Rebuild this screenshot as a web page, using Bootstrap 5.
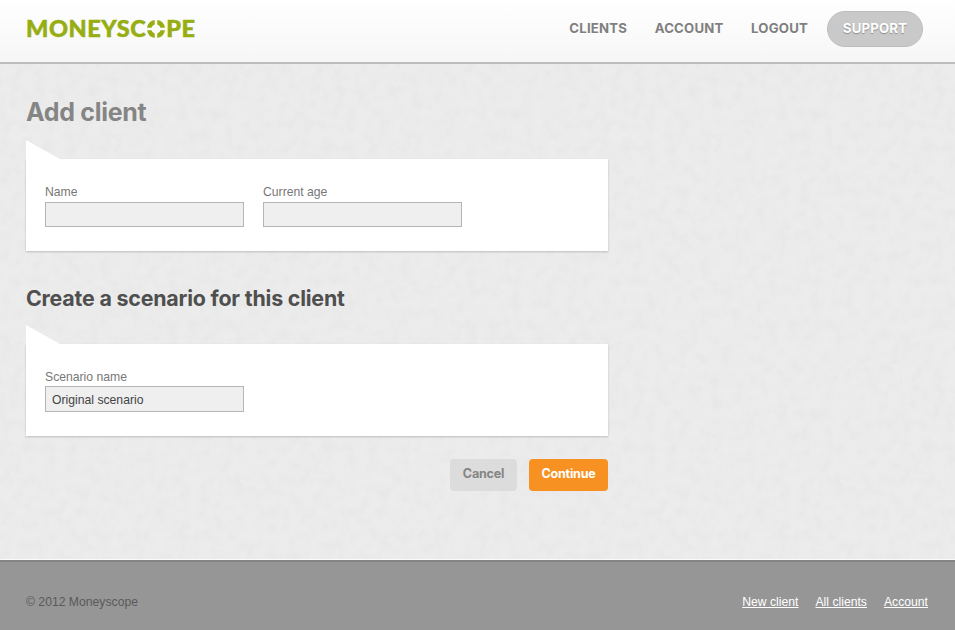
<!DOCTYPE html>
<html lang="en">
<head>
<meta charset="utf-8">
<title>Moneyscope - Add client</title>
<link href="https://cdn.jsdelivr.net/npm/bootstrap@5.3.0/dist/css/bootstrap.min.css" rel="stylesheet">
<style>
html, body { height: 630px; overflow: hidden; }
body { font-family: "Liberation Sans", Arial, sans-serif; font-size: 12px; background: #ececec; color: #666; }
.ms-shell { height: 630px; }
.ms-head { height: 64px; padding: 0 32px 5px 26px; background: linear-gradient(#ffffff, #f6f6f6); border-bottom: 2px solid #bdbdbd; }
.ms-logo { font-family: Lato, "Noto Sans", sans-serif; font-weight: 900; font-size: 23.5px; letter-spacing: .55px; color: #96ae12; line-height: 1; -webkit-text-stroke: .5px #96ae12; }
.ms-logo svg { width: 18px; height: 18px; margin: 0 1px; vertical-align: -1.5px; }
.ms-nav a { font-family: Inter, Lato, sans-serif; font-weight: 700; font-size: 13.2px; letter-spacing: .2px; color: #7f7f7f; text-decoration: none; text-shadow: 0 1px 0 #fff; }
.ms-nav { gap: 27.5px; }
.ms-nav a.ms-support { margin-left: -8.5px; width: 96px; height: 36px; border-radius: 18px; background: #c9c9c9; border: 1px solid #bdbdbd; color: #fff; text-shadow: 0 1px 1px #8a8a8a; }
.ms-main { flex: 1 1 auto; padding: 0 26px; background-color: #ececec; background-image: url("data:image/svg+xml,%3Csvg xmlns='http://www.w3.org/2000/svg' width='300' height='300'%3E%3Cfilter id='n'%3E%3CfeTurbulence type='fractalNoise' baseFrequency='.09' numOctaves='4'/%3E%3CfeColorMatrix values='0 0 0 0 .55 0 0 0 0 .55 0 0 0 0 .55 0 0 0 .22 -.08'/%3E%3C/filter%3E%3Crect width='300' height='300' filter='url(%23n)'/%3E%3C/svg%3E"); }
.ms-column { width: 582px; }
.ms-title1 { font-family: Inter, Lato, sans-serif; font-weight: 700; font-size: 25px; letter-spacing: -.3px; line-height: 32px; color: #858585; margin: 32px 0 0; }
.ms-title2 { font-family: Inter, Lato, sans-serif; font-weight: 700; font-size: 21.4px; letter-spacing: -.2px; line-height: 28px; color: #4f4f4f; margin: 33px 0 0; }
.ms-panel { position: relative; background: #fff; border-radius: 0; border: 0; box-shadow: 0 1px 2px rgba(0,0,0,.2); padding: 26px 19px 0; }
.ms-panel::before { content: ""; position: absolute; left: 0; top: -19px; width: 34px; height: 19px; background: #fff; clip-path: polygon(0 0, 100% 100%, 0 100%); }
.ms-panel-a { margin-top: 31px; height: 92px; }
.ms-panel-b { margin-top: 32px; height: 92px; }
.ms-label { display: block; font-size: 12.2px; line-height: 14px; color: #777; margin: 0 0 3px; }
.ms-panel-b .ms-label { margin-bottom: 2px; }
.ms-input { display: block; width: 199px; height: 25px; padding: 0 6px; font-family: inherit; font-size: 12.2px; color: #444; background: #efefef; border: 1px solid #b5b5b5; border-radius: 0; }
.ms-panel-b .ms-input { height: 26px; padding-top: 1px; }
.ms-fields { gap: 19px; }
.ms-actions { gap: 12px; margin-top: 23px; }
.ms-btn { height: 32px; border: 0; border-radius: 4px; padding: 0 0 2px; font-family: Inter, Lato, sans-serif; font-weight: 700; font-size: 12.5px; letter-spacing: -.2px; line-height: 1; }
.ms-btn-cancel { width: 67px; background: #dcdcdc; color: #858585; }
.ms-btn-go { width: 79px; background: #f79122; color: #fff; }
.ms-foot { height: 70px; padding: 12px 27px 0 26px; background: #969696; border-top: 2px solid #858585; box-shadow: 0 -1px 0 #fafafa; color: #5a5a5a; }
.ms-foot > div { font-size: 12.2px; }
.ms-foot-links { gap: 17px; }
.ms-foot-links a { color: #fff; text-decoration: underline; }
</style>
</head>
<body>
<div class="ms-shell d-flex flex-column">
  <header class="ms-head d-flex align-items-center justify-content-between flex-shrink-0">
    <div class="ms-logo">MONEYSC<svg viewBox="0 0 20 20" aria-hidden="true"><g fill="#96ae12"><path d="M8.6 0.1A10 10 0 0 0 .1 8.6H5A5 5 0 0 1 8.6 5Z"/><path d="M11.4 0.1A10 10 0 0 1 19.9 8.6H15A5 5 0 0 0 11.4 5Z"/><path d="M8.6 19.9A10 10 0 0 1 .1 11.4H5A5 5 0 0 0 8.6 15Z"/><path d="M11.4 19.9A10 10 0 0 0 19.9 11.4H15A5 5 0 0 1 11.4 15Z"/></g></svg>PE</div>
    <nav class="ms-nav d-flex align-items-center">
      <a href="#">CLIENTS</a>
      <a href="#">ACCOUNT</a>
      <a href="#">LOGOUT</a>
      <a href="#" class="ms-support d-flex align-items-center justify-content-center">SUPPORT</a>
    </nav>
  </header>
  <main class="ms-main">
    <div class="ms-column">
      <h1 class="ms-title1">Add client</h1>
      <div class="card ms-panel ms-panel-a">
        <div class="d-flex ms-fields">
          <div><label class="ms-label" for="f1">Name</label><input id="f1" class="ms-input" type="text"></div>
          <div><label class="ms-label" for="f2">Current age</label><input id="f2" class="ms-input" type="text"></div>
        </div>
      </div>
      <h2 class="ms-title2">Create a scenario for this client</h2>
      <div class="card ms-panel ms-panel-b">
        <div><label class="ms-label" for="f3">Scenario name</label><input id="f3" class="ms-input" type="text" value="Original scenario"></div>
      </div>
      <div class="d-flex justify-content-end ms-actions">
        <button type="button" class="btn ms-btn ms-btn-cancel">Cancel</button>
        <button type="button" class="btn ms-btn ms-btn-go">Continue</button>
      </div>
    </div>
  </main>
  <footer class="ms-foot d-flex align-items-center justify-content-between flex-shrink-0">
    <div>© 2012 Moneyscope</div>
    <div class="ms-foot-links d-flex"><a href="#">New client</a><a href="#">All clients</a><a href="#">Account</a></div>
  </footer>
</div>
<script src="https://cdn.jsdelivr.net/npm/bootstrap@5.3.0/dist/js/bootstrap.bundle.min.js"></script>
</body>
</html>
